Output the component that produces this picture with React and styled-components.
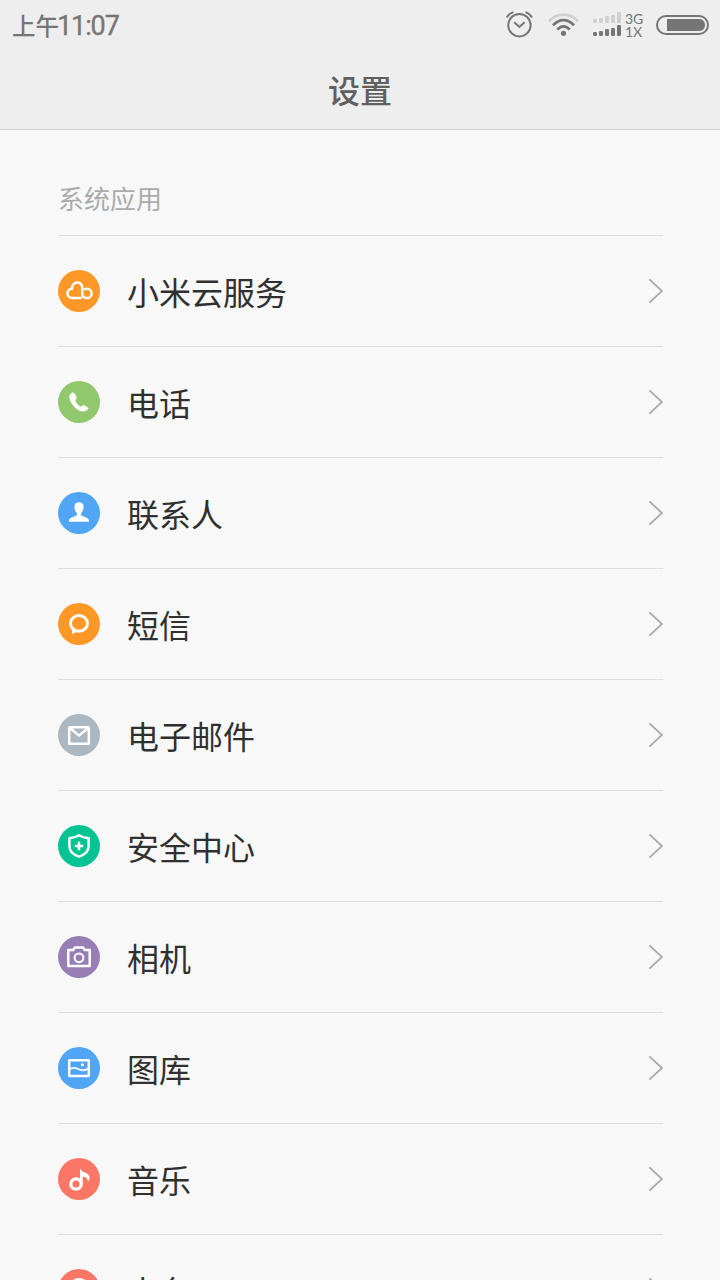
import React from "react";
import styled, { createGlobalStyle } from "styled-components";

const GlobalStyle = createGlobalStyle`
  * {
    box-sizing: border-box;
  }

  body {
    margin: 0;
    background: #f8f8f8;
    font-family: "Noto Sans CJK SC", sans-serif;
  }
`;

const Screen = styled.div`
  width: 720px;
  height: 1280px;
  overflow: hidden;
  display: flex;
  flex-direction: column;
  background: #f8f8f8;
`;

const Header = styled.header`
  height: 130px;
  flex-shrink: 0;
  background: #eeeeee;
  border-bottom: 1px solid #cccccc;
`;

const StatusBar = styled.div`
  height: 50px;
  padding: 0 11px 0 12px;
  display: flex;
  justify-content: space-between;
  align-items: center;
  color: #757575;
`;

const Clock = styled.div`
  display: flex;
  align-items: center;
  height: 48px;
  font-size: 23.5px;
  font-weight: 500;
  line-height: 48px;

  span {
    margin-left: -2px;
    padding-top: 2px;
    font-family: "Roboto", sans-serif;
    font-size: 27px;
    font-weight: 400;
    letter-spacing: -1.1px;
    -webkit-text-stroke: 0.3px #757575;
  }
`;

const StatusIcons = styled.div`
  display: flex;
  align-items: center;

  svg {
    display: block;
  }
`;

const Network = styled.div`
  width: 34px;
  padding-left: 3px;
  font-family: "Lato", sans-serif;
  font-size: 14px;
  line-height: 13px;
`;

const Title = styled.h1`
  margin: 0;
  height: 79px;
  color: #606060;
  font-size: 32px;
  font-weight: 500;
  line-height: 79px;
  text-align: center;
`;

const Section = styled.main`
  padding: 0 57px 0 58px;
`;

const SectionTitle = styled.h2`
  margin: 0;
  height: 106px;
  padding-top: 43px;
  border-bottom: 1px solid #dddddd;
  color: #ababab;
  font-size: 26px;
  font-weight: 400;
  line-height: 50px;
`;

const Row = styled.div`
  height: 111px;
  display: flex;
  align-items: center;
  border-bottom: 1px solid #dddddd;
`;

const Badge = styled.div`
  width: 42px;
  height: 42px;
  border-radius: 50%;
  background: ${(props) => props.$color};

  svg {
    display: block;
  }
`;

const Label = styled.div`
  flex: 1;
  margin-left: 27px;
  color: #303030;
  font-size: 32px;
  line-height: 48px;
`;

const ICONS = {
  cloud: (
    <path d="M23.6 28H14.2C7.4 27.4 8.4 18.8 14 18.8C14 10.6 24.2 10.6 24.2 17.5V23.5C24.2 26.7 26 28 28.8 28C35.2 28 35.2 18.8 28.8 18.8C27.4 18.8 26.6 19.2 26 19.8" />
  ),
  phone: (
    <path
      d="M14 12.2C11.2 13.3 11.1 17.2 13.5 21.5C17 27.8 23.2 31.5 27.5 29.6C29 29 30 28 30 27.3C29.5 26.4 26.5 24.6 25.5 24.6C24.4 24.7 23.7 26.2 22.6 25.9C20.5 25.2 17.5 21.8 17 19.8C16.8 18.7 18.4 18 18.2 16.8C18 15.3 16.5 12.5 15.5 12C15 11.8 14.5 12 14 12.2Z"
      fill="#fff"
      stroke="#fff"
      strokeWidth="0.9"
    />
  ),
  contact: (
    <path
      d="M21 10.3C17.8 10.3 16.2 12.2 16.5 15.2C16.6 18 17.5 20 18.9 21V23C17.8 24.3 13.4 25.2 12.3 26.3C11.2 27.3 11 28.5 11 29.7H31C31 28.5 30.8 27.3 29.7 26.3C28.6 25.2 24.2 24.3 23.1 23V21C24.5 20 25.4 18 25.5 15.2C25.8 12.2 24.2 10.3 21 10.3Z"
      fill="#fff"
      stroke="none"
    />
  ),
  message: (
    <>
      <ellipse cx="21" cy="20.4" rx="8.5" ry="7.8" strokeWidth="3" />
      <path d="M14 24L14.2 31.2L20 28Z" fill="#fff" stroke="none" />
    </>
  ),
  mail: (
    <>
      <rect x="11.2" y="13.2" width="19.6" height="16.6" rx="0.6" />
      <path d="M12.3 14.2L21 21.6L29.7 14.2" />
    </>
  ),
  shield: (
    <>
      <path d="M21 10.3C18.3 12 15 13 11.4 13.2V21C11.4 26.5 16 30 21 31.6C26 30 30.6 26.5 30.6 21V13.2C27 13 23.7 12 21 10.3Z" />
      <path d="M21 16.8V25.2M16.8 21H25.2" />
    </>
  ),
  camera: (
    <>
      <path d="M10.3 14H15.2L17 11.5H25L26.8 14H31.7V30H10.3Z" />
      <circle cx="21" cy="21.8" r="4.4" strokeWidth="2" />
    </>
  ),
  gallery: (
    <>
      <rect x="11.2" y="13.2" width="19.6" height="15.8" rx="0.5" />
      <path d="M11.5 22.3C15 19.8 17.5 20.7 20.5 22.2C23.5 23.7 26.5 23.8 30.5 21.5" strokeWidth="1.8" />
      <circle cx="24.4" cy="17.8" r="1.5" fill="#fff" stroke="none" />
    </>
  ),
  music: (
    <>
      <circle cx="18" cy="26" r="5.2" strokeWidth="3.3" />
      <path
        d="M22 10.3C23.2 13.4 26 14 28.5 15.3C32 17.2 32.8 20.6 29.9 23.8C30.1 20.6 27.9 18.8 24.7 18.5V26H22Z"
        fill="#fff"
        stroke="none"
      />
    </>
  ),
  radio: <circle cx="21" cy="20" r="9.5" strokeWidth="3" />,
};

const APPS = [
  { name: "小米云服务", color: "#ff9827", icon: "cloud" },
  { name: "电话", color: "#92c86d", icon: "phone" },
  { name: "联系人", color: "#50a5f4", icon: "contact" },
  { name: "短信", color: "#ff9827", icon: "message" },
  { name: "电子邮件", color: "#abb8c2", icon: "mail" },
  { name: "安全中心", color: "#04c392", icon: "shield" },
  { name: "相机", color: "#977fb5", icon: "camera" },
  { name: "图库", color: "#50a5f4", icon: "gallery" },
  { name: "音乐", color: "#fc7665", icon: "music" },
  { name: "电台", color: "#fc7665", icon: "radio" },
];

function AppIcon({ icon, color }) {
  return (
    <Badge $color={color}>
      <svg
        width="42"
        height="42"
        viewBox="0 0 42 42"
        fill="none"
        stroke="#fff"
        strokeWidth="2.5"
        strokeLinejoin="round"
      >
        {ICONS[icon]}
      </svg>
    </Badge>
  );
}

function Arrow() {
  return (
    <svg width="16" height="28" viewBox="0 0 16 28" fill="none">
      <path d="M2.4 2.4L15 14L2.4 25.6" stroke="#ababab" strokeWidth="1.9" />
    </svg>
  );
}

function StatusGlyphs() {
  return (
    <svg width="117" height="50" viewBox="505 0 117 50" fill="none" stroke="#757575">
      <circle cx="519.4" cy="25.2" r="11.2" strokeWidth="2" />
      <path d="M514.2 22.3L519.4 27L524.6 22.3" strokeWidth="2" />
      <path d="M506.8 17.5C508.4 14.7 510.3 13 513.4 12.1M532 17.5C530.4 14.7 528.5 13 525.4 12.1" strokeWidth="2" />
      <path d="M549 21.2C557 12.4 570 12.4 578 21.2" stroke="#d0d0d0" strokeWidth="2.8" />
      <path d="M553 25.4C559 18.4 568 18.4 574 25.4" strokeWidth="2.8" />
      <path d="M557.3 29.6C561 25.2 566 25.2 569.7 29.6" strokeWidth="2.8" />
      <circle cx="563.5" cy="33.3" r="2.6" fill="#757575" stroke="none" />
      {[4, 5, 7, 8, 11].map((h, i) => (
        <g key={h} stroke="none">
          <rect x={593 + i * 6} y={23 - h} width="4" height={h} rx="1.3" fill="#d0d0d0" />
          <rect x={593 + i * 6} y={36 - h} width="4" height={h} rx="1.3" fill="#757575" />
        </g>
      ))}
    </svg>
  );
}

function Battery() {
  return (
    <svg width="53" height="20" viewBox="0 0 53 20" fill="none">
      <rect x="1" y="1" width="51" height="18" rx="9" stroke="#757575" strokeWidth="2" />
      <path d="M11 4H43C51 4 51 16 43 16H11Z" fill="#757575" />
    </svg>
  );
}

function App() {
  return (
    <Screen>
      <GlobalStyle />
      <Header>
        <StatusBar>
          <Clock>
            上午<span>11:07</span>
          </Clock>
          <StatusIcons>
            <StatusGlyphs />
            <Network>
              <div>3G</div>
              <div>1X</div>
            </Network>
            <Battery />
          </StatusIcons>
        </StatusBar>
        <Title>设置</Title>
      </Header>
      <Section>
        <SectionTitle>系统应用</SectionTitle>
        {APPS.map((app) => (
          <Row key={app.name}>
            <AppIcon icon={app.icon} color={app.color} />
            <Label>{app.name}</Label>
            <Arrow />
          </Row>
        ))}
      </Section>
    </Screen>
  );
}

export default App;
